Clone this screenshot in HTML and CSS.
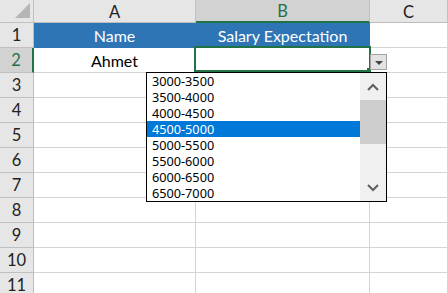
FILE: index.html
```html
<!DOCTYPE html>
<html lang="en">
<head>
    <meta charset="UTF-8">
    <title>Salary Expectation - Sheet1</title>
    <link rel="stylesheet" href="styles.css">
</head>
<body>
    <div class="sheet">
        <!-- column headers -->
        <div class="cell corner"><span class="corner-mark"></span></div>
        <div class="cell col-head">A</div>
        <div class="cell col-head active">B</div>
        <div class="cell col-head">C</div>

        <div class="cell row-head">1</div>
        <div class="cell title first">Name</div>
        <div class="cell title">Salary Expectation</div>
        <div class="cell"></div>

        <div class="cell row-head active">2</div>
        <div class="cell data">Ahmet</div>
        <div class="cell data"></div>
        <div class="cell"></div>

        <div class="cell row-head">3</div><div class="cell"></div><div class="cell"></div><div class="cell"></div>
        <div class="cell row-head">4</div><div class="cell"></div><div class="cell"></div><div class="cell"></div>
        <div class="cell row-head">5</div><div class="cell"></div><div class="cell"></div><div class="cell"></div>
        <div class="cell row-head">6</div><div class="cell"></div><div class="cell"></div><div class="cell"></div>
        <div class="cell row-head">7</div><div class="cell"></div><div class="cell"></div><div class="cell"></div>
        <div class="cell row-head">8</div><div class="cell"></div><div class="cell"></div><div class="cell"></div>
        <div class="cell row-head">9</div><div class="cell"></div><div class="cell"></div><div class="cell"></div>
        <div class="cell row-head">10</div><div class="cell"></div><div class="cell"></div><div class="cell"></div>
        <div class="cell row-head">11</div><div class="cell"></div><div class="cell"></div><div class="cell"></div>

        <!-- active cell B2 -->
        <div class="selection"></div>
        <div class="fill-handle"></div>

        <!-- validation dropdown -->
        <div class="dropdown-btn"><span class="arrow"></span></div>
        <div class="dropdown-list">
            <ul class="options">
                <li>3000-3500</li>
                <li>3500-4000</li>
                <li>4000-4500</li>
                <li class="selected">4500-5000</li>
                <li>5000-5500</li>
                <li>5500-6000</li>
                <li>6000-6500</li>
                <li>6500-7000</li>
            </ul>
            <div class="scrollbar">
                <div class="scroll-btn">
                    <svg width="12" height="8" viewBox="0 0 12 8"><path d="M1 7 L6 2 L11 7" fill="none" stroke="#5f5f5f" stroke-width="2"/></svg>
                </div>
                <div class="thumb"></div>
                <div class="track"></div>
                <div class="scroll-btn">
                    <svg width="12" height="8" viewBox="0 0 12 8"><path d="M1 1 L6 6 L11 1" fill="none" stroke="#5f5f5f" stroke-width="2"/></svg>
                </div>
            </div>
        </div>
    </div>
</body>
</html>
```

FILE: styles.css
```css
:root {
    --grid-color: #d4d4d4;
    --head-bg: #e6e6e6;
    --head-border: #c0c0c0;
    --active-bg: #d2d2d2;
    --excel-green: #217346;
    --title-blue: #2e75b6;
}

body {
    margin: 0;
    width: 448px;
    height: 293px;
    overflow: hidden;
    background: white;
    font-family: Lato, "Liberation Sans", sans-serif;
}

.sheet {
    position: relative;
    display: grid;
    grid-template-columns: 34px 162px 174px 1fr;
    grid-template-rows: 23px repeat(11, 25px);
    width: 448px;
}

.cell {
    box-sizing: border-box;
    border-right: 1px solid var(--grid-color);
    border-bottom: 1px solid var(--grid-color);
    display: flex;
    align-items: center;
    justify-content: center;
    font-size: 16px;
    color: #000;
}

.corner {
    background: var(--head-bg);
    border-right-color: var(--head-border);
    border-bottom-color: var(--head-border);
    position: relative;
}

.corner-mark {
    position: absolute;
    right: 3px;
    bottom: 4px;
    width: 0;
    height: 0;
    border-left: 15px solid transparent;
    border-bottom: 15px solid #b5b5b5;
}

.col-head {
    background: var(--head-bg);
    border-right-color: var(--head-border);
    border-bottom-color: #bdbdbd;
    font-size: 16.5px;
    color: #222;
    padding-top: 1px;
}

.col-head.active {
    background: var(--active-bg);
    color: var(--excel-green);
    border-bottom: 2px solid var(--excel-green);
}

.row-head {
    background: var(--head-bg);
    border-right-color: #bdbdbd;
    border-bottom-color: var(--head-border);
    font-size: 16.5px;
    color: #222;
}

.row-head.active {
    background: var(--active-bg);
    color: var(--excel-green);
    border-right: 2px solid var(--excel-green);
}

.title {
    background: var(--title-blue);
    color: white;
    border-right-color: var(--title-blue);
    border-bottom-color: var(--title-blue);
    padding-top: 1px;
}

.data {
    padding-top: 1px;
}

.selection {
    position: absolute;
    left: 194px;
    top: 46px;
    width: 177px;
    height: 26px;
    box-sizing: border-box;
    border: 2px solid var(--excel-green);
}

.fill-handle {
    position: absolute;
    left: 367px;
    top: 68px;
    width: 4px;
    height: 4px;
    background: var(--excel-green);
}

.dropdown-btn {
    position: absolute;
    left: 370px;
    top: 54px;
    width: 17px;
    height: 16px;
    box-sizing: border-box;
    background: #e3e3e3;
    border: 1px solid #a3a3a3;
    display: flex;
    align-items: center;
    justify-content: center;
}

.arrow {
    width: 0;
    height: 0;
    border-left: 4px solid transparent;
    border-right: 4px solid transparent;
    border-top: 4px solid #444;
    margin-top: 1px;
}

.dropdown-list {
    position: absolute;
    left: 146px;
    top: 72px;
    width: 241px;
    height: 130px;
    box-sizing: border-box;
    border: 1px solid #000;
    background: white;
    display: flex;
}

.options {
    list-style: none;
    margin: 0;
    padding: 0;
    flex: 1;
    font-family: "Noto Sans", sans-serif;
    font-size: 12.7px;
    color: #000;
}

.options li {
    height: 16px;
    line-height: 16px;
    padding-left: 5px;
}

.options li.selected {
    background: #0078d7;
    color: white;
}

.scrollbar {
    width: 26px;
    background: #f0f0f0;
    display: flex;
    flex-direction: column;
}

.scroll-btn {
    height: 27px;
    display: flex;
    align-items: center;
    justify-content: center;
}

.thumb {
    height: 44px;
    background: #cdcdcd;
}

.track {
    flex: 1;
}
```
